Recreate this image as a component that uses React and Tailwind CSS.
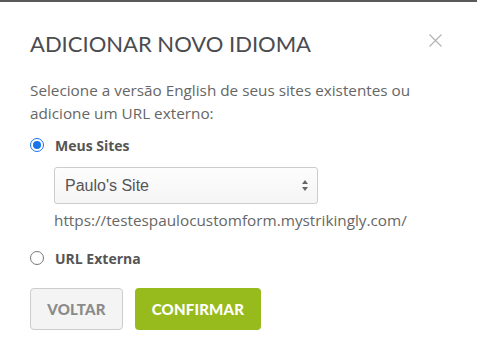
export default function App() {
  const sans = { fontFamily: '"Open Sans", "Noto Sans", sans-serif' };
  return (
    <div className="relative w-[477px] h-[354px] bg-white overflow-hidden" style={sans}>
      <div className="h-[2px] bg-[#5a5a5a]" />
      <div className="px-[30px] pt-[28px]">
        <div className="flex items-start justify-between">
          <h1 className="text-[22px] leading-[28px] text-[#4a4c50] tracking-[0px]" style={{ fontFamily: 'Lato, sans-serif' }}>
            ADICIONAR NOVO IDIOMA
          </h1>
          <svg className="mt-[4px] mr-[5px]" width="13" height="13" viewBox="0 0 13 13">
            <path d="M0.5 0.5 L12.5 12.5 M12.5 0.5 L0.5 12.5" stroke="#b0b0b0" strokeWidth="1.1" fill="none" />
          </svg>
        </div>
        <p className="mt-[21px] text-[15.3px] leading-[23px] text-[#666]">
          Selecione a versão English de seus sites existentes ou adicione um URL externo:
        </p>
        <div className="mt-[8px] flex items-center gap-[11px] h-[24px]">
          <span className="w-[14px] h-[14px] rounded-full border border-[#1a73e8] bg-white flex items-center justify-center">
            <span className="w-[8px] h-[8px] rounded-full bg-[#1a73e8]" />
          </span>
          <span className="text-[14px] font-bold text-[#555]">Meus Sites</span>
        </div>
        <div className="ml-[24px] mt-[10px] w-[264px] h-[37px] rounded-[3px] border border-[#ccc] bg-gradient-to-b from-[#fdfdfd] to-[#f5f5f5] flex items-center justify-between pl-[10px] pr-[9px]">
          <span className="text-[16px] text-[#555]" style={{ fontFamily: '"Liberation Sans", Arial, sans-serif' }}>Paulo's Site</span>
          <svg width="6" height="11" viewBox="0 0 6 11">
            <path d="M3 0 L6 4 L0 4 Z M0 7 L6 7 L3 11 Z" fill="#666" />
          </svg>
        </div>
        <div className="ml-[24px] mt-[4px] text-[15.3px] leading-[24px] text-[#666]">
          https://testespaulocustomform.mystrikingly.com/
        </div>
        <div className="mt-[14px] flex items-center gap-[11px] h-[24px]">
          <span className="w-[14px] h-[14px] rounded-full border border-[#777] bg-white" />
          <span className="text-[14px] font-bold text-[#555]">URL Externa</span>
        </div>
        <div className="mt-[18px] flex gap-[12px]">
          <button className="w-[93px] h-[42px] rounded-[4px] border border-[#ccc] bg-[#f4f4f4] text-[15px] font-black text-[#8a8a8a] tracking-[0.2px]" style={{ fontFamily: 'Lato, sans-serif' }}>
            VOLTAR
          </button>
          <button className="w-[126px] h-[42px] rounded-[4px] bg-[#97bb1d] text-[15px] font-black text-white tracking-[0.2px]" style={{ fontFamily: 'Lato, sans-serif' }}>
            CONFIRMAR
          </button>
        </div>
      </div>
    </div>
  );
}
